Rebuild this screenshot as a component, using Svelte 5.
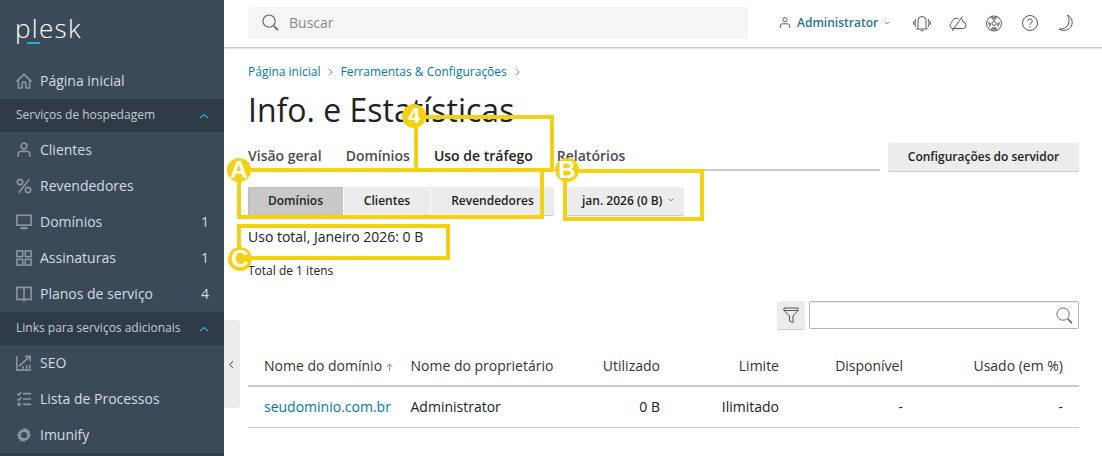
<script>
  const rows = [
    { name: 'seudominio.com.br', owner: 'Administrator', used: '0 B', limit: 'Ilimitado', free: '-', pct: '-' }
  ];
</script>

<div class="page">
  <aside class="side">
    <div class="logo"><span class="logotext">plesk</span><span class="logobar"></span></div>
    <nav>
      <a class="item" href="#a">
        <svg viewBox="0 0 18 18" class="ni"><path d="M.7 9.500 9 1.500l8.300 8M2.700 7.700V16.800h4.300V12a2 2 0 0 1 4 0V16.800h4.300V7.700"/></svg>
        <span>Página inicial</span>
      </a>
      <div class="sec"><span>Serviços de hospedagem</span><svg viewBox="0 0 10 6" class="up"><path d="M1 5 5 1.500 9 5"/></svg></div>
      <a class="item" href="#a">
        <svg viewBox="0 0 18 18" class="ni"><circle cx="9" cy="4.500" r="3.200"/><path d="M2.500 17v-3.500a3 3 0 0 1 3-3h7a3 3 0 0 1 3 3v3.500"/></svg>
        <span>Clientes</span>
      </a>
      <a class="item" href="#a">
        <svg viewBox="0 0 18 18" class="ni"><circle cx="4.500" cy="4.500" r="3"/><circle cx="13.500" cy="13.500" r="3"/><path d="M15 1.500 3 16.500"/></svg>
        <span>Revendedores</span>
      </a>
      <a class="item" href="#a">
        <svg viewBox="0 0 18 18" class="ni"><rect x="1" y="1.500" width="16" height="11"/><path d="M5 16h8" stroke-width="2.400"/></svg>
        <span>Domínios</span><b>1</b>
      </a>
      <a class="item" href="#a">
        <svg viewBox="0 0 18 18" class="ni"><rect x="1" y="1" width="6.500" height="6.500"/><rect x="10.500" y="1" width="6.500" height="6.500"/><rect x="1" y="10.500" width="6.500" height="6.500"/><rect x="10.500" y="10.500" width="6.500" height="6.500"/></svg>
        <span>Assinaturas</span><b>1</b>
      </a>
      <a class="item" href="#a">
        <svg viewBox="0 0 18 18" class="ni"><path d="M1 1.500h6.500L9 2.500l1.500-1H17v13.500h-6.500L9 16.500l-1.500-1.500H1zM9 2.500v14"/></svg>
        <span>Planos de serviço</span><b>4</b>
      </a>
      <div class="sec"><span>Links para serviços adicionais</span><svg viewBox="0 0 10 6" class="up"><path d="M1 5 5 1.500 9 5"/></svg></div>
      <a class="item" href="#a">
        <svg viewBox="0 0 18 18" class="ni"><path d="M1 1v16h16M3.500 12.500 15.500 1.500M10 1.500H16V7M8 15.500v-3M12 15.500v-4M15.500 15.500V11"/></svg>
        <span>SEO</span>
      </a>
      <a class="item" href="#a">
        <svg viewBox="0 0 18 18" class="ni"><path d="M8 3h9M8 9h9M8 15h9M1.500 3l1.500 1.500L6 1.500M1.500 9l1.500 1.500L6 7.500"/><circle cx="3.500" cy="15" r="2" class="fillc"/></svg>
        <span>Lista de Processos</span>
      </a>
      <a class="item" href="#a">
        <svg viewBox="0 0 18 18" class="ni"><path class="fillc" fill-rule="evenodd" d="M9 .5l1.500 2 2.500-.8.500 2.500 2.500.5L15.200 8l2.300 1-2.300 1 .8 2.300-2.500.5-.5 2.500-2.500-.8L9 17.500l-1.500-2-2.500.8-.5-2.500-2.500-.5L2.800 10 .5 9l2.300-1L2 5.700l2.500-.5.500-2.500 2.500.8zM9 5.500a3.500 3.500 0 1 0 0 7 3.500 3.500 0 0 0 0-7z"/></svg>
        <span>Imunify</span>
      </a>
    </nav>
  </aside>

  <div class="handle"><svg viewBox="0 0 6 10" class="chev"><path d="M4.500 1 1 5l3.500 4"/></svg></div>

  <div class="main">
    <header class="top">
      <div class="search">
        <svg viewBox="0 0 18 18" class="s-ic"><circle cx="7.500" cy="7.500" r="6.500"/><path d="M12.500 12.500 17 17" stroke-width="1.800"/></svg>
        <span>Buscar</span>
      </div>
      <div class="user">
        <svg viewBox="0 0 14 14" class="u-ic"><circle cx="7" cy="3.700" r="2.500"/><path d="M1.500 13.500v-2.500a2.500 2.500 0 0 1 2.500-2.500h6a2.500 2.500 0 0 1 2.500 2.500v2.500"/></svg>
        <span>Administrator</span>
        <svg viewBox="0 0 8 5" class="caret"><path d="M1 1l3 2.500L7 1"/></svg>
      </div>
      <div class="tools">
        <svg viewBox="0 0 18 18" class="t-ic"><path d="M5 13.500V6.500a4 4 0 0 1 8 0V13.500l1.300 1.500H3.700zM7.500 16.700h3M2.800 5c-1 2.500-1 5.500 0 8M15.200 5c1 2.500 1 5.500 0 8M1 7c-.5 1.300-.5 2.700 0 4M17 7c.5 1.300.5 2.700 0 4"/></svg>
        <svg viewBox="0 0 18 18" class="t-ic"><path d="M6 14.500H4a3 3 0 0 1-1.300-5.700C3 5.500 6 3.500 9.500 4.700M12.500 4.500a5 5 0 0 1 1.500 3.500 3.300 3.300 0 0 1 .5 6.500H6M3 17 13.500 2.500"/></svg>
        <svg viewBox="0 0 18 18" class="t-ic"><circle cx="9" cy="9.500" r="7.500"/><circle cx="9" cy="9.500" r="2"/><path class="fillg" d="M5.500 3h7L9 7.500zM2.500 7.500l4 2L5 14zM15.500 7.500l-4 2L13 14zM7 13h4l1.500 3h-7z"/></svg>
        <svg viewBox="0 0 18 18" class="t-ic"><circle cx="9" cy="9" r="7.500"/><path d="M6.800 7a2.200 2.200 0 1 1 3.200 2c-.7.400-1 .8-1 1.800M9 12.300v1.300"/></svg>
        <svg viewBox="0 0 18 18" class="t-ic"><path d="M10.500 1c5 2.500 6 8.500 3 12.500-2.500 3.200-8 3.800-11.500 1.500 3.700.3 7.300-.7 9-4 1.500-3.200 1.500-6.700-.5-10z"/></svg>
      </div>
    </header>

    <main class="content">
      <div class="crumbs">
        <a href="#a">Página inicial</a><svg viewBox="0 0 6 10" class="sep"><path d="M1 1l4 4-4 4"/></svg>
        <a href="#a">Ferramentas &amp; Configurações</a><svg viewBox="0 0 6 10" class="sep"><path d="M1 1l4 4-4 4"/></svg>
      </div>
      <h1>Info. e Estatísticas</h1>

      <div class="tabrow">
        <div class="tabs">
          <span class="tab">Visão geral</span>
          <span class="tab">Domínios</span>
          <span class="tab on">Uso de tráfego</span>
          <span class="tab">Relatórios</span>
        </div>
        <button class="btn cfg">Configurações do servidor</button>
      </div>

      <div class="toolbar">
        <div class="seg">
          <button class="btn s1 act">Domínios</button>
          <button class="btn s2">Clientes</button>
          <button class="btn s3">Revendedores</button>
        </div>
        <button class="btn month"><span>jan. 2026 (0 B)</span><svg viewBox="0 0 8 5" class="caret dark"><path d="M1 1l3 2.500L7 1"/></svg></button>
      </div>

      <p class="usage">Uso total, Janeiro 2026: 0 B</p>
      <p class="count">Total de 1 itens</p>

      <div class="filters">
        <button class="btn fbtn"><svg viewBox="0 0 16 16" class="f-ic"><path d="M1 1h14v2.500L10 9v6.500L6.500 14V9L1 3.500zM1 3.500h14"/></svg></button>
        <div class="inp"><svg viewBox="0 0 18 18" class="i-ic"><circle cx="7.500" cy="7.500" r="6.500"/><path d="M12.500 12.500 17 17" stroke-width="1.800"/></svg></div>
      </div>

      <div class="tbl">
        <div class="tr th">
          <div>Nome do domínio <svg viewBox="0 0 8 9" class="arr"><path d="M4 9V1.500M1 4l3-3 3 3"/></svg></div>
          <div>Nome do proprietário</div>
          <div class="r">Utilizado</div>
          <div class="r">Limite</div>
          <div class="r">Disponível</div>
          <div class="r">Usado (em %)</div>
        </div>
        {#each rows as row}
          <div class="tr body">
            <div><a href="#a">{row.name}</a></div>
            <div>{row.owner}</div>
            <div class="r">{row.used}</div>
            <div class="r">{row.limit}</div>
            <div class="r">{row.free}</div>
            <div class="r">{row.pct}</div>
          </div>
        {/each}
      </div>
    </main>
  </div>

  <div class="mark m4"></div>
  <div class="mark ma"></div>
  <div class="mark mb"></div>
  <div class="mark mc"></div>
  <div class="dot d4">4</div>
  <div class="dot da">A</div>
  <div class="dot db">B</div>
  <div class="dot dc">C</div>
</div>

<style>
  :global(body) { margin: 0; background: #fff; }
  .page {
    position: relative; width: 1102px; height: 456px; overflow: hidden;
    display: flex; font-family: "Open Sans", sans-serif; color: #222; font-size: 14px;
  }
  svg { display: block; fill: none; stroke: currentColor; flex: none; }
  a { text-decoration: none; color: #007aa6; }
  button { font-family: inherit; border: 0; padding: 0 0 2px; cursor: pointer; }
  p, h1 { margin: 0; font-weight: 400; }

  .side { width: 224px; flex: none; height: 456px; background: #3b4a59; color: #d5dbe0; position: relative; }
  .side::after { content: ""; position: absolute; left: 0; right: 0; bottom: 0; height: 3px; background: #2f3b47; }
  .logo { height: 63px; position: relative; box-sizing: border-box; padding: 7px 0 0 15px; }
  .logotext { font-size: 26px; font-weight: 300; color: #fff; line-height: 42px; letter-spacing: 1.300px; display: block; }
  .logobar { position: absolute; left: 27px; top: 42px; width: 13px; height: 2px; background: #28aade; }
  .item { height: 36px; display: flex; align-items: center; padding: 0 15px 0 16px; color: #d5dbe0; font-size: 14px; }
  .item span { flex: 1; margin-left: 8px; margin-bottom: 2px; }
  .item b { font-weight: 400; font-size: 14px; width: 12px; text-align: right; margin-bottom: 2px; }
  .ni { width: 16px; height: 16px; color: #8b96a1; stroke-width: 1.800; }
  .fillc { fill: #8b96a1; stroke: none; }
  .sec { height: 33px; background: #2f3b47; display: flex; align-items: center; justify-content: space-between; padding: 0 15px 0 16px; font-size: 12px; color: #c3cbd2; }
  .sec span { margin-bottom: 2px; }
  .up { width: 10px; height: 6px; color: #28aade; stroke-width: 1.200; }

  .handle { position: absolute; left: 224px; top: 320px; width: 16px; height: 88px; background: #ececec; border-radius: 0 4px 4px 0; display: flex; align-items: center; padding-left: 5px; box-sizing: border-box; }
  .chev { width: 5px; height: 9px; color: #444; stroke-width: 1.200; }

  .main { flex: 1; min-width: 0; }
  .top { height: 47px; display: flex; align-items: center; border-bottom: 1px solid #ccc; box-shadow: 0 1px 1px #e4e4e4; }
  .search { margin-left: 24px; width: 500px; height: 32px; background: #f5f5f5; border-radius: 3px; display: flex; align-items: center; color: #888; font-size: 14px; margin-top: -2px; }
  .s-ic { width: 17px; height: 17px; margin: 0 10px 0 14px; color: #666; stroke-width: 1.200; }
  .user { margin-left: 31px; display: flex; align-items: center; color: #28749a; font-size: 12px; font-weight: 600; margin-top: -2px; }
  .u-ic { width: 12px; height: 13px; color: #555; stroke-width: 1.100; margin-right: 6px; }
  .caret { width: 6px; height: 4px; margin-left: 6px; color: #666; stroke-width: 1; }
  .tools { margin-left: 23px; display: flex; gap: 18px; color: #444; margin-top: -2px; }
  .t-ic { width: 18px; height: 18px; stroke-width: .9; }
  .fillg { fill: #888; stroke: none; }

  .content { padding: 15px 23px 0 24px; }
  .crumbs { display: flex; align-items: center; font-size: 12px; height: 17px; }
  .sep { width: 5px; height: 8px; margin: 0 7px 0 8px; color: #666; stroke-width: 1; }
  h1 { font-size: 32px; line-height: 44px; margin-top: 8px; color: #222; }

  .tabrow { display: flex; align-items: flex-end; gap: 8px; margin-top: 11px; height: 28px; }
  .tabs { width: 632px; height: 28px; display: flex; gap: 24px; border-bottom: 2px solid #ccc; box-sizing: border-box; }
  .tab { font-size: 14px; font-weight: 600; color: #4b4b4b; line-height: 25px; height: 26px; white-space: nowrap; }
  .tab.on { color: #222; }
  .btn { background: #ececec; color: #222; font-size: 12px; font-weight: 600; height: 28px; border-radius: 2px; box-shadow: 0 1px 0 #ccc; }
  .cfg { width: 191px; }

  .toolbar { display: flex; gap: 12px; margin-top: 16px; }
  .seg { display: flex; gap: 1px; }
  .s1 { width: 95px; border-radius: 2px 0 0 2px; }
  .s2 { width: 86px; border-radius: 0; }
  .s3 { width: 123px; border-radius: 0 2px 2px 0; }
  .act { background: #c8c8c8; box-shadow: inset 1px 1px 0 #bbb, 0 1px 0 #bbb; }
  .month { width: 118px; display: flex; align-items: center; padding-left: 16px; }

  .usage { font-size: 14px; line-height: 20px; margin-top: 12px; }
  .count { font-size: 12px; line-height: 16px; margin-top: 16px; }

  .filters { display: flex; justify-content: flex-end; gap: 4px; margin-top: 22px; }
  .fbtn { width: 28px; display: flex; align-items: center; justify-content: center; padding: 0; }
  .f-ic { width: 16px; height: 16px; color: #555; stroke-width: 1; }
  .inp { width: 270px; height: 28px; box-sizing: border-box; border: 1px solid #b5b5b5; border-radius: 2px; display: flex; justify-content: flex-end; align-items: center; padding-right: 5px; box-shadow: inset 0 1px 1px #eee; }
  .i-ic { width: 17px; height: 17px; color: #666; stroke-width: 1; }

  .tbl { margin-top: 16px; }
  .tr { display: grid; grid-template-columns: 146px 166px 116px 119px 124px 160px; height: 41px; align-items: center; border-bottom: 1px solid #ccc; font-size: 14px; box-sizing: border-box; }
  .tr > div { padding: 0 16px; white-space: nowrap; }
  .tr > div.r { text-align: right; }
  .tr > div:nth-child(2) { padding-left: 16.500px; }
  .body > div { margin-bottom: 2px; }
  .th { height: 42px; border-bottom: 2px solid #ccc; color: #333; }
  .arr { display: inline-block; width: 7px; height: 8px; color: #999; stroke-width: 1.200; }

  .mark { position: absolute; border: 4px solid #f4d112; box-sizing: border-box; pointer-events: none; }
  .m4 { left: 414px; top: 115px; width: 140px; height: 57px; }
  .ma { left: 237px; top: 168px; width: 307px; height: 51px; }
  .mb { left: 563px; top: 169px; width: 141px; height: 52px; }
  .mc { left: 237px; top: 224px; width: 213px; height: 36px; }
  .dot { position: absolute; width: 24px; height: 24px; border-radius: 50%; background: #f4d112; color: #fff; font: 700 24px/24px "Liberation Sans", sans-serif; text-align: center; }
  .d4 { left: 402px; top: 104px; font-size: 22px; }
  .da { left: 227px; top: 158px; }
  .db { left: 555px; top: 158px; }
  .dc { left: 228px; top: 247px; }
</style>
